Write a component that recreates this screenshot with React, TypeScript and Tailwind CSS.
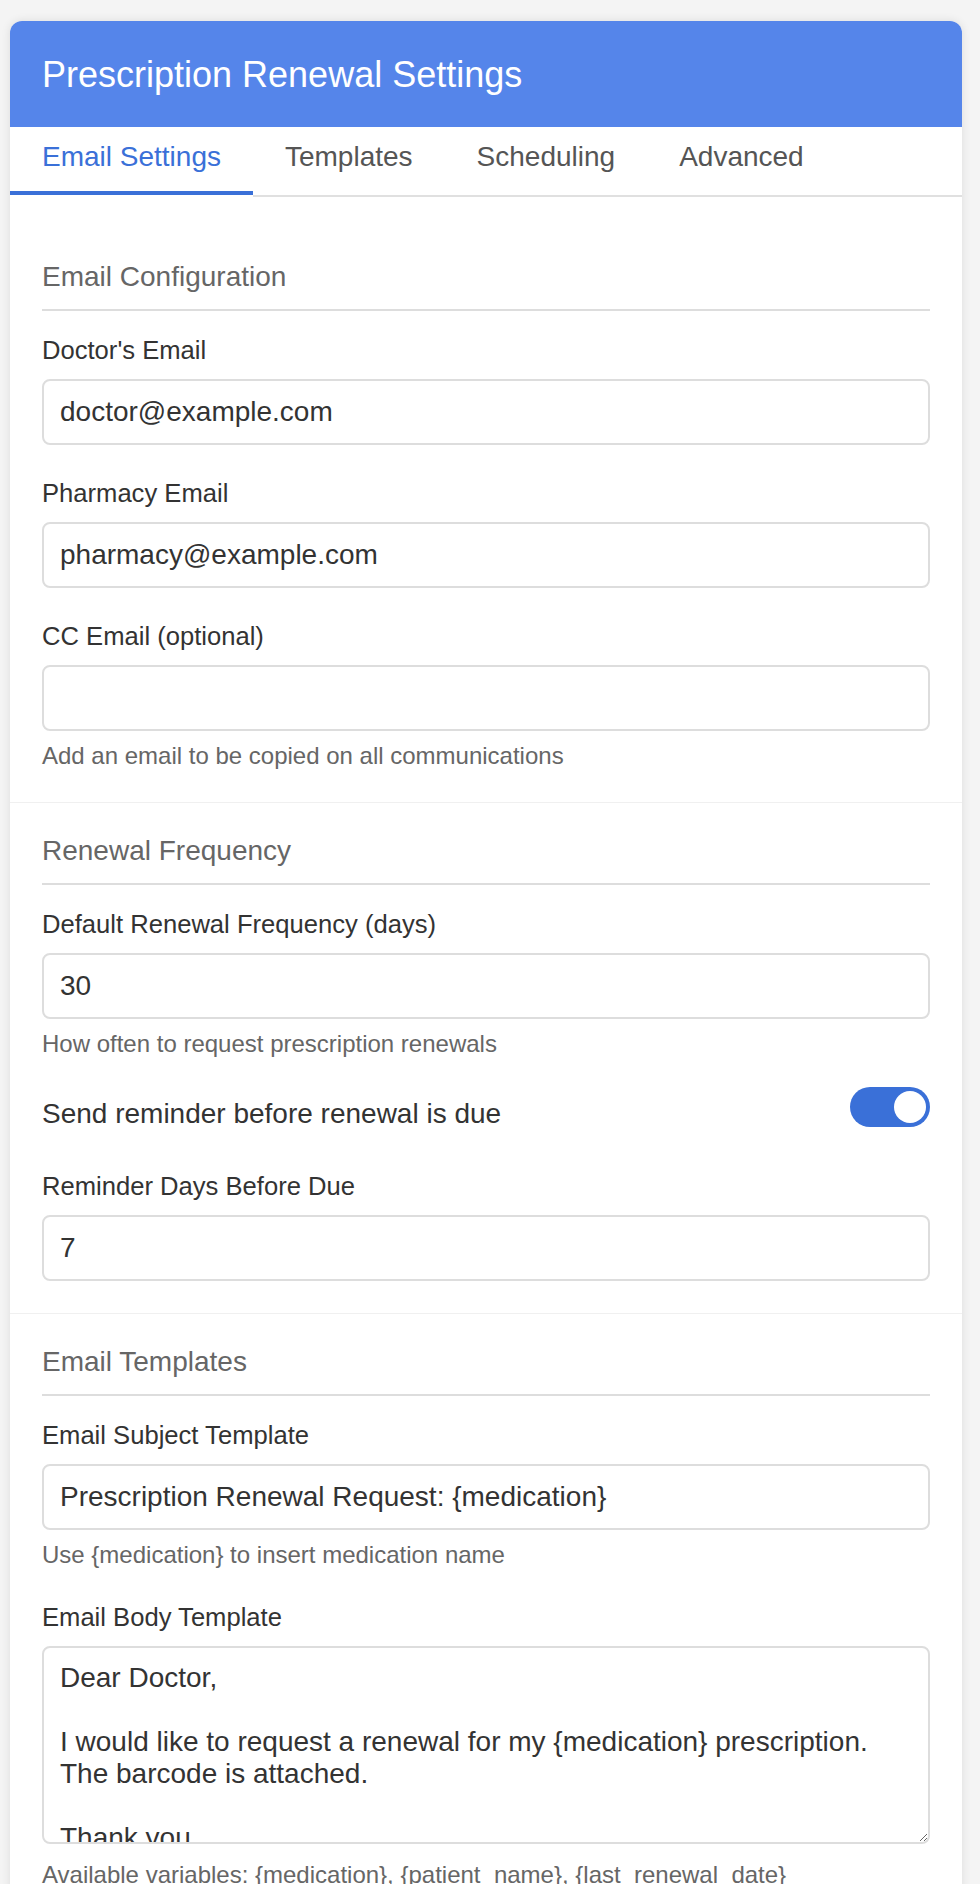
import React from "react";

const TABS = ["Email Settings", "Templates", "Scheduling", "Advanced"];

function Field({
  label,
  value,
  help,
}: {
  label: string;
  value?: string;
  help?: string;
}) {
  return (
    <div>
      <label className="block text-[25.6px] leading-[30px] text-[#333] mb-[14px]">
        {label}
      </label>
      <input
        type="text"
        defaultValue={value}
        className="block w-full h-[66px] px-[16px] border-2 border-[#ddd] rounded-[8px] text-[28px] leading-[32px] text-[#333] bg-white outline-none"
      />
      {help && (
        <p className="mt-[11px] text-[24px] leading-[27.6px] text-[#666]">{help}</p>
      )}
    </div>
  );
}

function Section({ title, children }: { title: string; children: React.ReactNode }) {
  return (
    <section className="px-8 py-8 border-b border-[#f0f0f0]">
      <h2 className="text-[28px] leading-[32px] text-[#666] font-normal pb-4 border-b-2 border-[#ddd] mb-6">
        {title}
      </h2>
      <div className="flex flex-col gap-[33px]">{children}</div>
    </section>
  );
}

function Toggle({ on }: { on: boolean }) {
  return (
    <button
      type="button"
      className={`relative w-[80px] h-[40px] rounded-full mb-[15px] ${
        on ? "bg-[#3a70d8]" : "bg-[#ccc]"
      }`}
    >
      <span
        className={`absolute top-[4px] w-[32px] h-[32px] rounded-full bg-white ${
          on ? "right-[4px]" : "left-[4px]"
        }`}
      />
    </button>
  );
}

const BODY =
  "Dear Doctor,\n\nI would like to request a renewal for my {medication} prescription. The barcode is attached.\n\nThank you,\n{patient_name}";

export default function App() {
  return (
    <div className="min-h-screen bg-[#f4f4f4] pt-[21px] pl-[10px] font-['Liberation_Sans',Arial,sans-serif]">
      <div className="w-[952px] bg-white rounded-[12px] shadow-[0_0_10px_rgba(0,0,0,0.1)] overflow-hidden">
        {/* Header */}
        <div className="h-[106px] bg-[#5585ea] px-8 flex items-center">
          <h1 className="text-[36px] leading-[41px] text-white font-normal">
            Prescription Renewal Settings
          </h1>
        </div>

        {/* Tabs */}
        <div className="flex border-b-2 border-[#e0e0e0]">
          {TABS.map((t, i) =>
            i === 0 ? (
              <button
                key={t}
                className="relative -mb-[2px] px-8 pt-[14px] pb-[24px] text-[28px] leading-[32px] text-[#3a70d8] bg-white shadow-[inset_0_-2px_0_#fff,inset_0_-6px_0_#3a70d8]"
              >
                {t}
              </button>
            ) : (
              <button
                key={t}
                className="px-8 pt-[14px] pb-[22px] text-[28px] leading-[32px] text-[#555]"
              >
                {t}
              </button>
            )
          )}
        </div>

        <div className="pt-8">
          <Section title="Email Configuration">
            <Field label="Doctor's Email" value="doctor@example.com" />
            <Field label="Pharmacy Email" value="pharmacy@example.com" />
            <Field
              label="CC Email (optional)"
              value=""
              help="Add an email to be copied on all communications"
            />
          </Section>

          <Section title="Renewal Frequency">
            <Field
              label="Default Renewal Frequency (days)"
              value="30"
              help="How often to request prescription renewals"
            />
            <div className="h-[48px] flex items-center justify-between">
              <span className="text-[28px] leading-[32px] text-[#333]">
                Send reminder before renewal is due
              </span>
              <Toggle on />
            </div>
            <Field label="Reminder Days Before Due" value="7" />
          </Section>

          <Section title="Email Templates">
            <Field
              label="Email Subject Template"
              value="Prescription Renewal Request: {medication}"
              help="Use {medication} to insert medication name"
            />
            <div>
              <label className="block text-[25.6px] leading-[30px] text-[#333] mb-[14px]">
                Email Body Template
              </label>
              <textarea
                defaultValue={BODY}
                className="block w-full h-[198px] px-[16px] py-[14px] border-2 border-[#ddd] rounded-[8px] text-[28px] leading-[32px] text-[#333] overflow-hidden outline-none"
              />
              <p className="mt-[17px] text-[24px] leading-[27.6px] text-[#666]">
                Available variables: {"{medication}"}, {"{patient_name}"}, {"{last_renewal_date}"}
              </p>
            </div>
          </Section>
        </div>
      </div>
    </div>
  );
}
